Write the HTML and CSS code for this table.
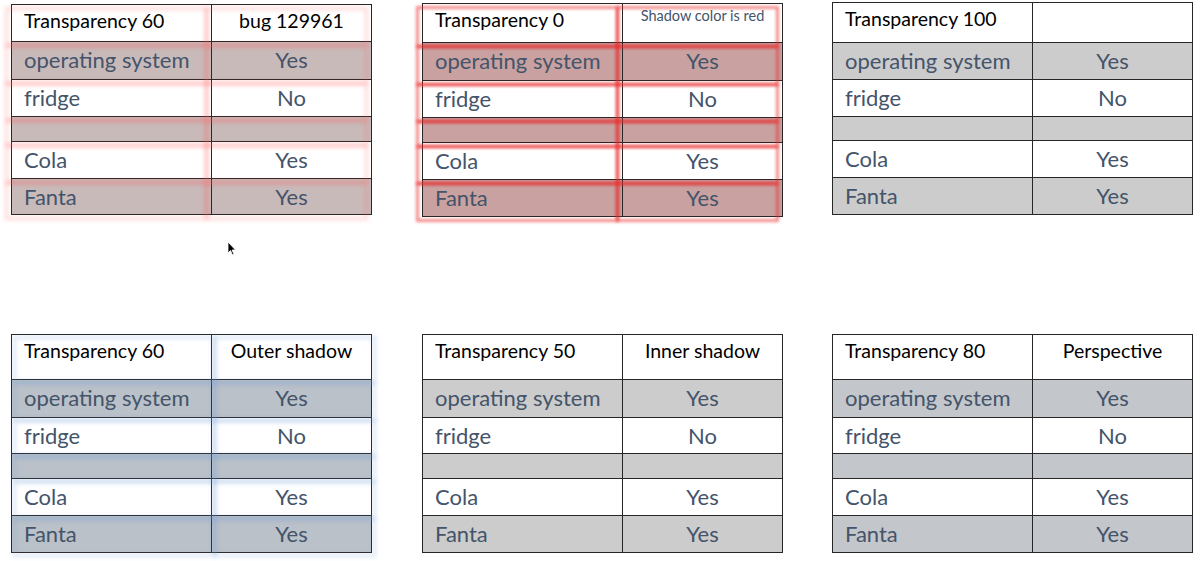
FILE: index.html
```html
<!DOCTYPE html>
<html>
<head>
<meta charset="utf-8">
<link rel="stylesheet" href="styles.css">
</head>
<body>
<div class="page">
  <div class="row row-top">
    <table class="grid fx-pink t1">
      <colgroup><col class="c1"><col class="c2"></colgroup>
      <tr class="hd"><td class="h">Transparency 60</td><td class="h ctr">bug 129961</td></tr>
      <tr class="g r1"><td>operating system</td><td class="ctr">Yes</td></tr>
      <tr class="w r2"><td>fridge</td><td class="ctr">No</td></tr>
      <tr class="g r3"><td></td><td></td></tr>
      <tr class="w r4"><td>Cola</td><td class="ctr">Yes</td></tr>
      <tr class="g r5"><td>Fanta</td><td class="ctr">Yes</td></tr>
    </table>
    <table class="grid fx-red t2">
      <colgroup><col class="c1"><col class="c2"></colgroup>
      <tr class="hd"><td class="h">Transparency 0</td><td class="h ctr small">Shadow color is red</td></tr>
      <tr class="g r1"><td>operating system</td><td class="ctr">Yes</td></tr>
      <tr class="w r2"><td>fridge</td><td class="ctr">No</td></tr>
      <tr class="g r3"><td></td><td></td></tr>
      <tr class="w r4"><td>Cola</td><td class="ctr">Yes</td></tr>
      <tr class="g r5"><td>Fanta</td><td class="ctr">Yes</td></tr>
    </table>
    <table class="grid plain t3">
      <colgroup><col class="c1"><col class="c2"></colgroup>
      <tr class="hd"><td class="h">Transparency 100</td><td class="h ctr"></td></tr>
      <tr class="g r1"><td>operating system</td><td class="ctr">Yes</td></tr>
      <tr class="w r2"><td>fridge</td><td class="ctr">No</td></tr>
      <tr class="g r3"><td></td><td></td></tr>
      <tr class="w r4"><td>Cola</td><td class="ctr">Yes</td></tr>
      <tr class="g r5"><td>Fanta</td><td class="ctr">Yes</td></tr>
    </table>
  </div>
  <div class="row row-bottom">
    <table class="grid fx-blue t4">
      <colgroup><col class="c1"><col class="c2"></colgroup>
      <tr class="hd"><td class="h">Transparency 60</td><td class="h ctr">Outer shadow</td></tr>
      <tr class="g r1"><td>operating system</td><td class="ctr">Yes</td></tr>
      <tr class="w r2"><td>fridge</td><td class="ctr">No</td></tr>
      <tr class="g r3"><td></td><td></td></tr>
      <tr class="w r4"><td>Cola</td><td class="ctr">Yes</td></tr>
      <tr class="g r5"><td>Fanta</td><td class="ctr">Yes</td></tr>
    </table>
    <table class="grid plain t5">
      <colgroup><col class="c1"><col class="c2"></colgroup>
      <tr class="hd"><td class="h">Transparency 50</td><td class="h ctr">Inner shadow</td></tr>
      <tr class="g r1"><td>operating system</td><td class="ctr">Yes</td></tr>
      <tr class="w r2"><td>fridge</td><td class="ctr">No</td></tr>
      <tr class="g r3"><td></td><td></td></tr>
      <tr class="w r4"><td>Cola</td><td class="ctr">Yes</td></tr>
      <tr class="g r5"><td>Fanta</td><td class="ctr">Yes</td></tr>
    </table>
    <table class="grid persp t6">
      <colgroup><col class="c1"><col class="c2"></colgroup>
      <tr class="hd"><td class="h">Transparency 80</td><td class="h ctr">Perspective</td></tr>
      <tr class="g r1"><td>operating system</td><td class="ctr">Yes</td></tr>
      <tr class="w r2"><td>fridge</td><td class="ctr">No</td></tr>
      <tr class="g r3"><td></td><td></td></tr>
      <tr class="w r4"><td>Cola</td><td class="ctr">Yes</td></tr>
      <tr class="g r5"><td>Fanta</td><td class="ctr">Yes</td></tr>
    </table>
  </div>
  <svg class="cursor" width="11" height="16" viewBox="0 0 11 16">
    <path d="M1 1 L1 12 L3.5 9.5 L5.5 14 L7 13.3 L5 9 L8.5 9 Z" fill="#000" stroke="#fff" stroke-width="0.8"/>
  </svg>
</div>
</body>
</html>
```
FILE: styles.css
```css
html, body {
  margin: 0;
  padding: 0;
  background: #ffffff;
}
.page {
  position: relative;
  width: 1200px;
  height: 561px;
  padding-left: 11px;
  box-sizing: border-box;
  font-family: "Lato", "Open Sans", sans-serif;
}
.row {
  display: grid;
  grid-template-columns: 360px 360px 360px;
  column-gap: 51px;
  align-items: start;
}
.row-bottom {
  position: absolute;
  left: 11px;
  top: 334px;
}
.grid {
  border-collapse: collapse;
  table-layout: fixed;
  width: 361px;
}
.c1 { width: 200px; }
.c2 { width: 160px; }
.grid td {
  position: relative;
  border: 1px solid #262626;
  padding: 0 12px;
  font-size: 22px;
  line-height: 26px;
  color: #44546a;
  vertical-align: top;
  padding-top: 5px;
  white-space: nowrap;
  overflow: visible;
}
.grid td.h {
  font-size: 19.5px;
  line-height: 24px;
  color: #000;
  padding-top: 4px;
}
.grid td.ctr { text-align: center; }
.grid td.small {
  font-size: 14.5px;
  line-height: 18px;
  color: #44546a;
  padding-top: 3px;
}
.grid tr.w td { background: #ffffff; }
.grid tr.hd td { background: #ffffff; }
.grid tr.g td { background: #cccccc; }

.grid tr.hd { height: 37px; }
.grid tr.r1 { height: 38px; }
.grid tr.r2 { height: 37px; }
.grid tr.r3 { height: 25px; }
.grid tr.r4 { height: 37px; }
.grid tr.r5 { height: 36px; }

.t1 { margin-top: 4px; }
.t2 { margin-top: 3px; }
.t2 tr.hd { height: 39px; }
.t2 tr.r5 { height: 37px; }
.t3 { margin-top: 2px; margin-left: -1px; }
.t3 tr.hd { height: 40px; }
.t3 tr.r1 { height: 37px; }
.t3 tr.r3 { height: 24px; }
.t3 tr.r5 { height: 37px; }

.row-bottom .grid tr.hd { height: 45px; }
.row-bottom .grid tr.r2 { height: 36px; }
.row-bottom .grid tr.r5 { height: 37px; }
.t6 { margin-left: -1px; }

/* tinted fills */
.fx-pink tr.g td { background: #c9baba; }
.fx-red tr.g td { background: #c9a1a1; }
.fx-blue tr.g td { background: #bac1c8; }
.persp tr.g td { background: #c3c6ca; }

/* blurred shadow copies of the cell grid */
.fx-pink td::after,
.fx-red td::after,
.fx-blue td::after {
  content: "";
  position: absolute;
  inset: -2px;
  z-index: 1;
  pointer-events: none;
  filter: blur(1.5px);
}
.fx-pink td::after {
  border: 3px solid rgba(255, 90, 90, 0.25);
  transform: translate(-5px, 4px);
  filter: blur(2px);
}
.fx-red td::after {
  border: 3px solid rgba(235, 40, 40, 0.55);
  transform: translate(-5px, 4px);
}
.fx-blue td::after {
  border: 3px solid rgba(110, 160, 215, 0.25);
  transform: translate(3px, 3px);
  filter: blur(2px);
}

.cursor {
  position: absolute;
  left: 227px;
  top: 241px;
}
```
